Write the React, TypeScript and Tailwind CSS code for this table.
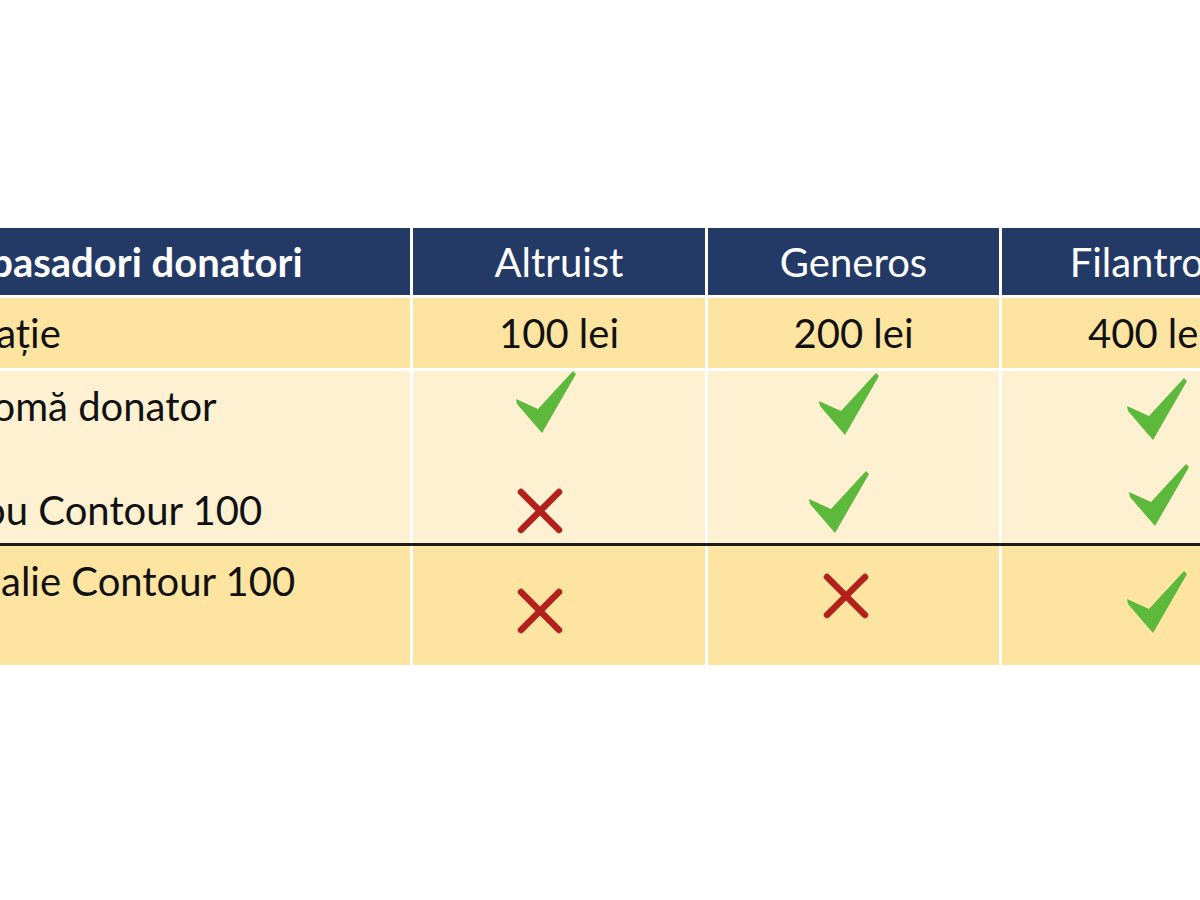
import React from "react";

function Check() {
  return (
    <svg width="60" height="62" viewBox="0 0 60 62" className="block shrink-0">
      <polygon points="0,28 22,38 57,0 60,3 26,62 1,33" fill="#5cb93b" />
    </svg>
  );
}

function Cross() {
  return (
    <svg width="46" height="46" viewBox="0 0 46 46" className="block shrink-0">
      <g stroke="#b3211d" strokeWidth="6.5" strokeLinecap="round">
        <line x1="4" y1="4" x2="42" y2="42" />
        <line x1="42" y1="4" x2="4" y2="42" />
      </g>
    </svg>
  );
}

export default function App() {
  return (
    <div className="w-[1200px] h-[900px] bg-white overflow-hidden font-['Lato','Open_Sans',sans-serif] text-[40px] text-[#111]">
      <div className="pt-[228px] ml-[-100px] flex flex-col">
        {/* Header */}
        <div className="flex gap-[3px] h-[67px] text-white">
          <div className="w-[510px] shrink-0 bg-[#243a66] pl-[29px] flex items-center font-bold leading-[52px]">
            Ambasadori donatori
          </div>
          <div className="w-[292px] shrink-0 bg-[#243a66] flex items-center justify-center leading-[52px]">Altruist</div>
          <div className="w-[291px] shrink-0 bg-[#243a66] flex items-center justify-center leading-[52px]">Generos</div>
          <div className="w-[292px] shrink-0 bg-[#243a66] flex items-center justify-center leading-[52px]">Filantrop</div>
        </div>

        {/* Donatie */}
        <div className="flex gap-[3px] h-[70px] mt-[3px] bg-white leading-[52px]">
          <div className="w-[510px] shrink-0 bg-[#fde4a0] pl-[21px] pt-[9px]">Donație</div>
          <div className="w-[292px] shrink-0 bg-[#fde4a0] pt-[9px] text-center">100 lei</div>
          <div className="w-[291px] shrink-0 bg-[#fde4a0] pt-[9px] text-center">200 lei</div>
          <div className="w-[292px] shrink-0 bg-[#fde4a0] pt-[9px] text-center">400 lei</div>
        </div>

        {/* Diploma + tricou */}
        <div className="flex gap-[3px] h-[172px] mt-[3px] leading-[52px]">
          <div className="w-[510px] shrink-0 bg-[#fef1d2] pl-[21px] pt-[9px]">
            <div>Diplomă donator</div>
            <div className="h-[52px]" />
            <div>Tricou Contour 100</div>
          </div>
          <div className="w-[292px] shrink-0 bg-[#fef1d2] flex flex-col">
            <div className="ml-[103px]"><Check /></div>
            <div className="ml-[104px] mt-[55px]"><Cross /></div>
          </div>
          <div className="w-[291px] shrink-0 bg-[#fef1d2] flex flex-col">
            <div className="ml-[111px] mt-[2px]"><Check /></div>
            <div className="ml-[101px] mt-[36px]"><Check /></div>
          </div>
          <div className="w-[292px] shrink-0 bg-[#fef1d2] flex flex-col">
            <div className="ml-[125px] mt-[7px]"><Check /></div>
            <div className="ml-[127px] mt-[24px]"><Check /></div>
          </div>
        </div>

        <div className="h-[3px] bg-[#1c1c1c]" />

        {/* Medalie */}
        <div className="flex gap-[3px] h-[119px] leading-[52px]">
          <div className="w-[510px] shrink-0 bg-[#fde4a0] pl-[21px] pt-[9px]">Medalie Contour 100</div>
          <div className="w-[292px] shrink-0 bg-[#fde4a0] flex flex-col">
            <div className="ml-[104px] mt-[42px]"><Cross /></div>
          </div>
          <div className="w-[291px] shrink-0 bg-[#fde4a0] flex flex-col">
            <div className="ml-[115px] mt-[27px]"><Cross /></div>
          </div>
          <div className="w-[292px] shrink-0 bg-[#fde4a0] flex flex-col">
            <div className="ml-[125px] mt-[25px]"><Check /></div>
          </div>
        </div>
      </div>
    </div>
  );
}
